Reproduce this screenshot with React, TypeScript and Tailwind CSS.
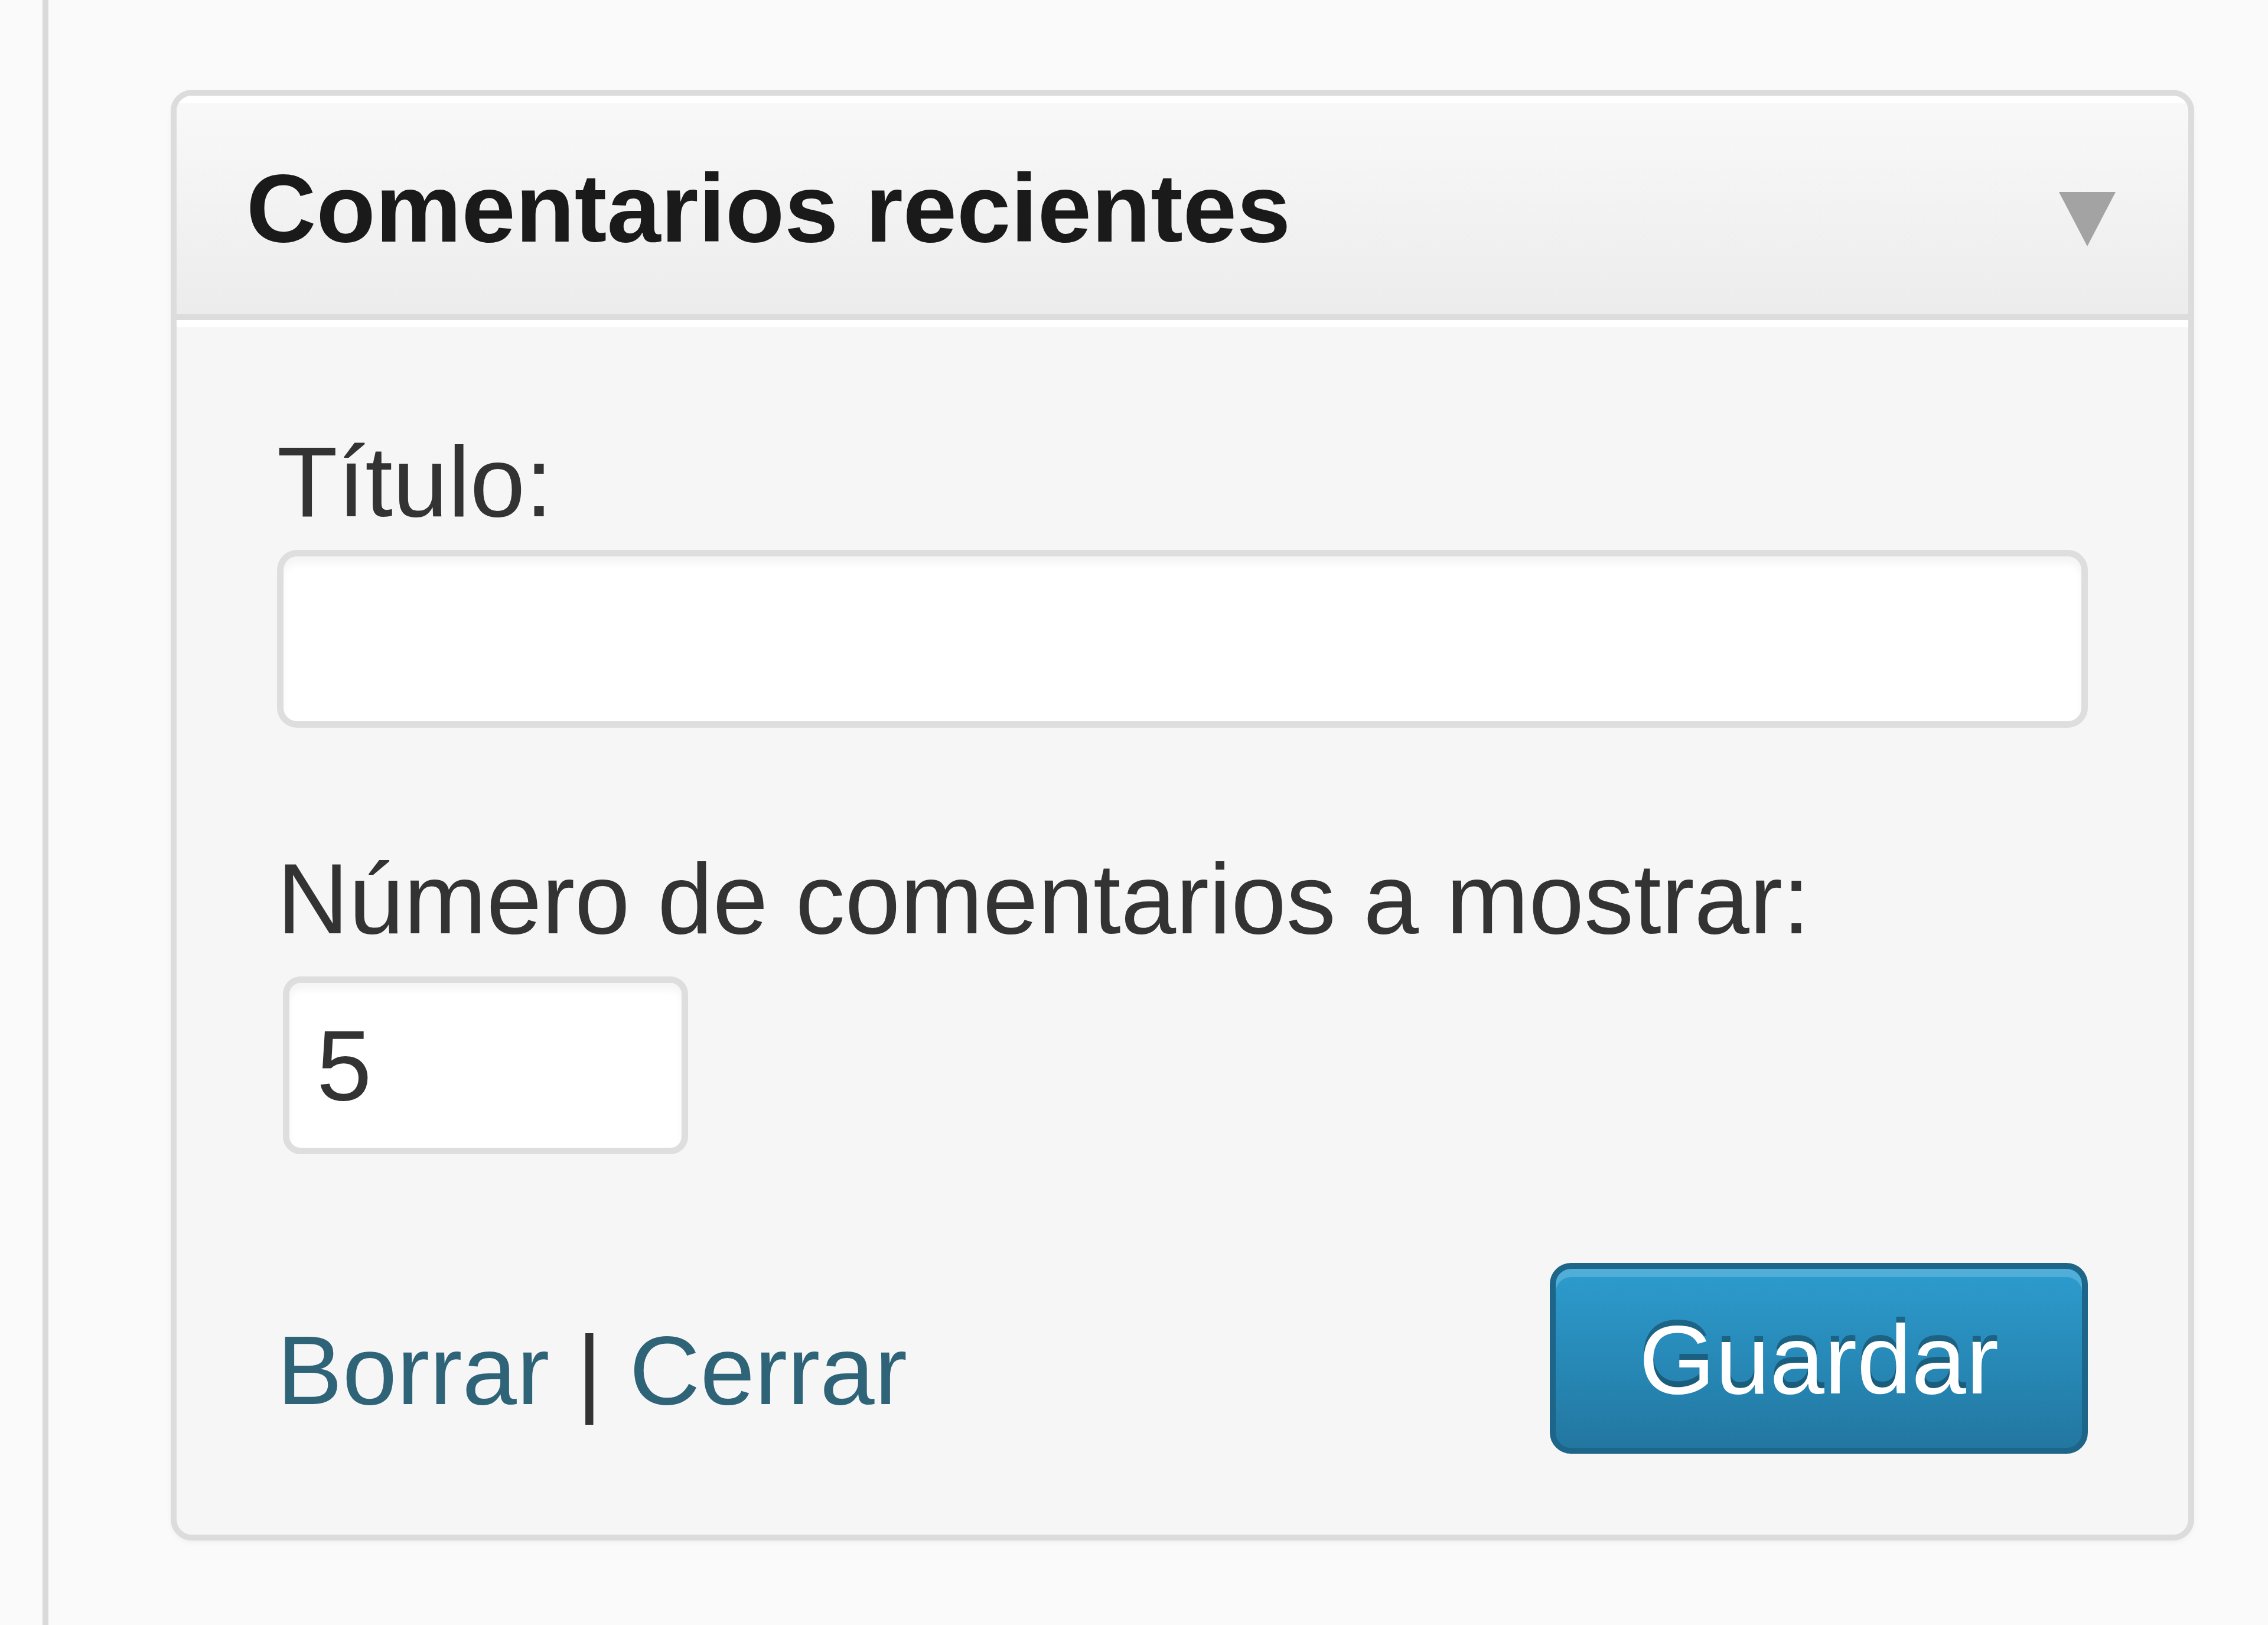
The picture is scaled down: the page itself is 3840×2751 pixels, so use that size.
import React from 'react';

export default function App() {
  return (
    <div className="flex w-[3840px] h-[2751px] bg-[#fafafa] font-['Liberation_Sans',Arial,sans-serif]">
      {/* sidebar edge */}
      <div className="ml-[72px] w-[10px] h-full bg-[#dadada]" />

      {/* Widget */}
      <div className="ml-[207px] mt-[152px] w-[3426px] h-[2456px] flex flex-col border-[10px] border-[#dcdcdc] rounded-[36px] overflow-hidden bg-[#f6f6f6] shadow-[0_4px_8px_rgba(0,0,0,0.04)]">
        {/* Header */}
        <div className="flex items-center justify-between h-[382px] pl-[118px] pr-[123px] pt-[12px] bg-gradient-to-b from-[#f9f9f9] to-[#ececec] border-b-[10px] border-[#dcdcdc] shadow-[inset_0_12px_0_#ffffff]">
          <h3 className="text-[164px] leading-[190px] font-bold text-[#1a1a1a]">
            Comentarios recientes
          </h3>
          <svg width="96" height="92" viewBox="0 0 96 92" className="mt-[36px]">
            <polygon points="0,0 96,0 48,92" fill="#a3a3a3" />
          </svg>
        </div>

        {/* Body */}
        <div className="flex flex-col flex-1 px-[170px] pt-[179px] pb-[137px] shadow-[inset_0_12px_0_#ffffff] text-[168px] leading-[190px] text-[#333333]">
          <label>Título:</label>
          <div className="mt-[20px] h-[301px] w-full bg-white border-[11px] border-[#dedede] rounded-[34px] shadow-[inset_0_12px_12px_rgba(0,0,0,0.04)]" />

          <label className="mt-[195px]">Número de comentarios a mostrar:</label>
          <div className="mt-[36px] ml-[10px] flex items-center h-[301px] w-[686px] pl-[46px] bg-white border-[11px] border-[#dedede] rounded-[30px] shadow-[inset_0_12px_12px_rgba(0,0,0,0.04)] text-[#333333]">
            5
          </div>

          <div className="mt-[184px] flex items-start justify-between">
            <div className="pt-[87px] text-[166px] text-[#2f6478]">
              <a href="#">Borrar</a>
              <span className="text-[#333333]"> | </span>
              <a href="#">Cerrar</a>
            </div>
            <button className="flex items-center justify-center w-[911px] h-[323px] rounded-[36px] border-[10px] border-[#1d6589] bg-gradient-to-b from-[#2d9ccf] to-[#2277a0] shadow-[inset_0_14px_0_rgba(110,190,225,0.55)] text-[166px] text-white [text-shadow:0_-10px_0_rgba(0,0,0,0.3)] pt-[4px]">
              Guardar
            </button>
          </div>
        </div>
      </div>
    </div>
  );
}
